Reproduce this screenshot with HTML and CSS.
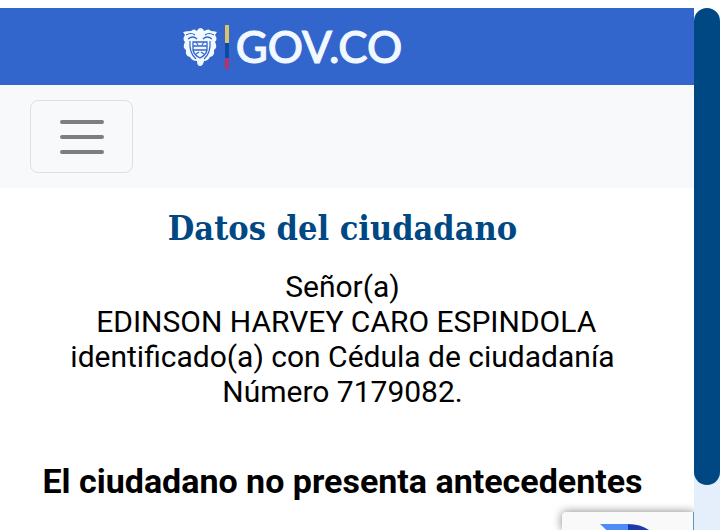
FILE: index.html
```html
<!DOCTYPE html>
<html lang="es">
<head>
<meta charset="utf-8">
<meta name="viewport" content="width=device-width, initial-scale=1">
<title>Datos del ciudadano</title>
<link rel="stylesheet" href="styles.css">
</head>
<body>
<div class="page">
  <div class="main">
    <header class="gov-bar">
      <a class="brand" href="#">
        <svg class="crest" viewBox="0 0 36 40" aria-hidden="true">
          <path fill="#f2f8ff" d="M1 5 Q5 4 9 4 Q12 1 15 4 Q16 1 19 1 Q22 2 22 4 Q27 1 29 4 Q32 4 35 5 L33 8 Q36 12 33 15 Q36 20 32 23 Q33 29 28 30 Q26 34 22 34 Q21 39 18 39 Q15 39 15 34 Q10 34 8 30 Q3 29 4 23 Q0 20 3 15 Q0 12 3 8Z"/>
          <path fill="none" stroke="#3366cc" stroke-width="1.2" d="M4 8 Q9 5 13 8 M23 8 Q27 5 32 8 M6 12 Q11 8 15 12 M21 12 Q25 8 30 12 M8 14 Q7 26 14 32 M28 14 Q29 26 22 32"/>
          <path fill="none" stroke="#3366cc" stroke-width="1.3" d="M11 15 H25 V23 Q24 28 18 31 Q12 28 11 23Z M11 19 H25 M11 23 H25"/>
          <path fill="none" stroke="#3366cc" stroke-width="1.2" d="M14 15 L16 18 M22 15 L20 18 M14 27 L17 25 M22 27 L19 25"/>
        </svg>
        <span class="flag"></span>
        <span class="wordmark">GOV.CO</span>
      </a>
    </header>
    <nav class="navbar">
      <button class="toggler" type="button" aria-label="Menú">
        <svg class="bars" viewBox="0 0 46 36" aria-hidden="true">
          <path d="M3 3H43M3 18H43M3 33H43" stroke="#7d7e7f" stroke-width="4" stroke-linecap="round"/>
        </svg>
      </button>
    </nav>
    <main class="content">
      <h1 class="title">Datos del ciudadano</h1>
      <p class="person">Señor(a)<br>&nbsp;EDINSON HARVEY CARO ESPINDOLA<br>identificado(a) con Cédula de ciudadanía<br>Número 7179082.</p>
      <h2 class="result">El ciudadano no presenta antecedentes</h2>
    </main>
    <div class="captcha">
      <svg class="captcha-logo" viewBox="0 0 66 66" aria-hidden="true">
        <path fill="#4d8bf5" d="M4 0H32V22L25 20Z"/>
        <path fill="#1c3aa9" d="M32 0C46 0 56 6 63 16V33H46Q42 22 32 20Z"/>
      </svg>
    </div>
  </div>
  <div class="scroll-track"><div class="scroll-thumb"></div></div>
</div>
</body>
</html>
```
FILE: styles.css
```css
* { box-sizing: border-box; }
body {
  margin: 0;
  background: #fff;
  color: #000;
  font-family: Roboto, "Liberation Sans", sans-serif;
}
.page {
  display: grid;
  grid-template-columns: 1fr 26px;
  height: 100vh;
  padding-top: 8px;
  overflow: hidden;
}
.main {
  position: relative;
  overflow: hidden;
}
.gov-bar {
  display: flex;
  justify-content: center;
  align-items: center;
  height: 77px;
  padding-right: 110px;
  background: #3366cc;
}
.brand {
  display: flex;
  align-items: center;
  color: #f2f8ff;
  text-decoration: none;
}
.crest { width: 36px; height: 40px; }
.flag {
  width: 4px;
  height: 44px;
  margin: 0 7px;
  background: linear-gradient(#d9c36a 0 42%, #0b4ba5 42% 75%, #b8326a 75%);
}
.wordmark {
  padding-bottom: 2px;
  font: 500 44px/48px Lato, "Open Sans", sans-serif;
  -webkit-text-stroke: 1px currentColor;
}
.navbar {
  padding: 15px 30px;
  background: #f8f9fb;
}
.toggler {
  display: flex;
  justify-content: center;
  align-items: center;
  width: 103px;
  height: 73px;
  padding: 0;
  border: 1px solid #dedfe1;
  border-radius: 8px;
  background: transparent;
}
.bars { width: 46px; height: 36px; }
.content {
  padding: 20px 9px 0 0;
  text-align: center;
}
.title {
  margin: 0;
  color: #004884;
  font: bold 34px/40px "DejaVu Serif Condensed", "DejaVu Serif", serif;
}
.person {
  margin: 21px 0 0;
  font-size: 30px;
  line-height: 35px;
}
.result {
  margin: 53px 0 0;
  font-size: 34px;
  line-height: 38px;
  font-weight: 700;
}
.captcha {
  position: absolute;
  right: 0;
  bottom: 0;
  width: 132px;
  height: 18px;
  padding: 12px 0 0 34px;
  border-right: 1px solid #5f93b8;
  border-top-left-radius: 4px;
  background: #f9f9f9;
  box-shadow: 0 0 10px #808080;
}
.captcha-logo { display: block; width: 66px; height: 66px; }
.scroll-track { background: linear-gradient(#fff 0 30px, #e5eefb 30px); }
.scroll-thumb {
  height: 477px;
  border-radius: 13px;
  background: #004884;
}
```
